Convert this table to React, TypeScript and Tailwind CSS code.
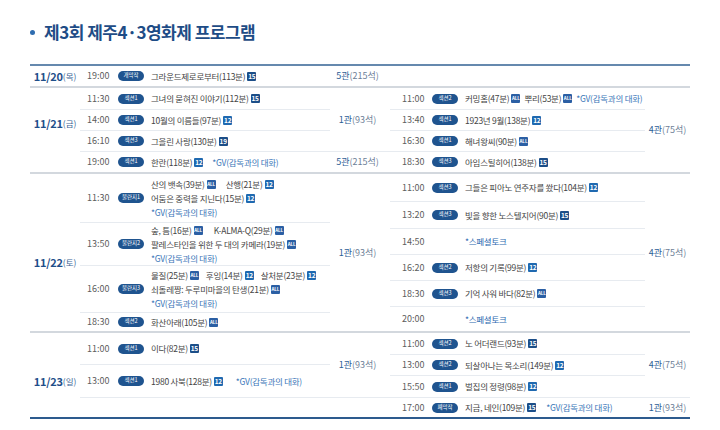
import clsx from 'clsx';

type Rating = 'ALL' | '12' | '15' | '19';
type Piece = { t: string; r?: Rating } | 'GV' | 'TALK';

type Row = { time?: string; badge?: string; h: string; lines: Piece[][]; gap?: string };
type Group = { venue?: [string, string]; rows: Row[] };
type Section = {
  date: string;
  day: string;
  h: string;
  datePad: string;
  left: Group[];
  right: Group[];
};

const GV: Piece = 'GV';
const TALK: Piece = 'TALK';

const sections: Section[] = [
  {
    date: '11/20',
    day: '(목)',
    h: 'h-[22px]',
    datePad: '',
    left: [
      {
        venue: ['5관', '(215석)'],
        rows: [{ time: '19:00', badge: '개막작', h: 'h-[20px]', lines: [[{ t: '그라운드제로로부터(113분)', r: '15' }]] }],
      },
    ],
    right: [],
  },
  {
    date: '11/21',
    day: '(금)',
    h: 'h-[86px]',
    datePad: 'pb-[14px]',
    left: [
      {
        venue: ['1관', '(93석)'],
        rows: [
          { time: '11:30', badge: '섹션1', h: 'h-[21px]', lines: [[{ t: '그녀의 묻혀진 이야기(112분)', r: '15' }]] },
          { time: '14:00', badge: '섹션1', h: 'h-[21px]', lines: [[{ t: '10월의 이름들(97분)', r: '12' }]] },
          { time: '16:10', badge: '섹션3', h: 'h-[21px]', lines: [[{ t: '그을린 사랑(130분)', r: '19' }]] },
        ],
      },
      {
        venue: ['5관', '(215석)'],
        rows: [{ time: '19:00', badge: '섹션1', h: 'h-[21px]', gap: 'gap-[9px]', lines: [[{ t: '한란(118분)', r: '12' }, GV]] }],
      },
    ],
    right: [
      {
        venue: ['4관', '(75석)'],
        rows: [
          {
            time: '11:00',
            badge: '섹션2',
            h: 'h-[21px]',
            gap: 'gap-[4px]',
            lines: [[{ t: '커밍홈(47분)', r: 'ALL' }, { t: '뿌리(53분)', r: 'ALL' }, GV]],
          },
          { time: '13:40', badge: '섹션1', h: 'h-[21px]', lines: [[{ t: '1923년 9월(138분)', r: '12' }]] },
          { time: '16:30', badge: '섹션1', h: 'h-[21px]', lines: [[{ t: '해녀왕씨(90분)', r: 'ALL' }]] },
          { time: '18:30', badge: '섹션3', h: 'h-[21px]', lines: [[{ t: '아임스틸히어(138분)', r: '15' }]] },
        ],
      },
    ],
  },
  {
    date: '11/22',
    day: '(토)',
    h: 'h-[159px]',
    datePad: 'pt-[19px]',
    left: [
      {
        venue: ['1관', '(93석)'],
        rows: [
          {
            time: '11:30',
            badge: '불란지1',
            h: 'h-[48px]',
            gap: 'gap-[10px]',
            lines: [
              [{ t: '산의 뱃속(39분)', r: 'ALL' }, { t: '산행(21분)', r: '12' }],
              [{ t: '어둠은 중력을 지닌다(15분)', r: '12' }],
              [GV],
            ],
          },
          {
            time: '13:50',
            badge: '불란지2',
            h: 'h-[43px]',
            gap: 'gap-[11px]',
            lines: [
              [{ t: '숲, 틈(16분)', r: 'ALL' }, { t: 'K-ALMA-Q(29분)', r: 'ALL' }],
              [{ t: '팔레스타인을 위한 두 대의 카메라(19분)', r: 'ALL' }],
              [GV],
            ],
          },
          {
            time: '16:00',
            badge: '불란지3',
            h: 'h-[47px]',
            gap: 'gap-[7px]',
            lines: [
              [{ t: '물질(25분)', r: 'ALL' }, { t: '후잉(14분)', r: '12' }, { t: '살처분(23분)', r: '12' }],
              [{ t: '쇠돌레짱: 두루미마을의 탄생(21분)', r: 'ALL' }],
              [GV],
            ],
          },
          { time: '18:30', badge: '섹션2', h: 'h-[19px]', lines: [[{ t: '화산아래(105분)', r: 'ALL' }]] },
        ],
      },
    ],
    right: [
      {
        venue: ['4관', '(75석)'],
        rows: [
          { time: '11:00', badge: '섹션3', h: 'h-[27px]', lines: [[{ t: '그들은 피아노 연주자를 쐈다(104분)', r: '12' }]] },
          { time: '13:20', badge: '섹션3', h: 'h-[27px]', lines: [[{ t: '빛을 향한 노스텔지어(90분)', r: '15' }]] },
          { time: '14:50', h: 'h-[26px]', lines: [[TALK]] },
          { time: '16:20', badge: '섹션2', h: 'h-[26px]', lines: [[{ t: '저항의 기록(99분)', r: '12' }]] },
          { time: '18:30', badge: '섹션3', h: 'h-[26px]', lines: [[{ t: '기억 사워 바다(82분)', r: 'ALL' }]] },
          { time: '20:00', h: 'h-[25px]', lines: [[TALK]] },
        ],
      },
    ],
  },
  {
    date: '11/23',
    day: '(일)',
    h: 'h-[84px]',
    datePad: 'pt-[12px]',
    left: [
      {
        venue: ['1관', '(93석)'],
        rows: [
          { time: '11:00', badge: '섹션1', h: 'h-[31px]', lines: [[{ t: '이다(82분)', r: '15' }]] },
          { time: '13:00', badge: '섹션1', h: 'h-[33px]', gap: 'gap-[13px]', lines: [[{ t: '1980 사북(128분)', r: '12' }, GV]] },
        ],
      },
      { rows: [{ h: 'h-[20px]', lines: [] }] },
    ],
    right: [
      {
        venue: ['4관', '(75석)'],
        rows: [
          { time: '11:00', badge: '섹션2', h: 'h-[21px]', lines: [[{ t: '노 어더랜드(93분)', r: '15' }]] },
          { time: '13:00', badge: '섹션2', h: 'h-[21px]', lines: [[{ t: '되살아나는 목소리(149분)', r: '12' }]] },
          { time: '15:50', badge: '섹션1', h: 'h-[22px]', lines: [[{ t: '벌집의 정령(98분)', r: '12' }]] },
        ],
      },
      {
        venue: ['1관', '(93석)'],
        rows: [{ time: '17:00', badge: '폐막작', h: 'h-[20px]', gap: 'gap-[10px]', lines: [[{ t: '지금, 네인(109분)', r: '15' }, GV]] }],
      },
    ],
  },
];

const ratingBg: Record<Rating, string> = {
  ALL: 'bg-[#2b5fa4]',
  '12': 'bg-[#1f69b0]',
  '15': 'bg-[#1c4e88]',
  '19': 'bg-[#1c4e88]',
};

function RatingMark({ r }: { r: Rating }) {
  return (
    <span
      className={clsx(
        'ml-[2px] inline-flex h-[9px] w-[9px] shrink-0 items-center justify-center rounded-[1px] font-bold leading-none text-white',
        r === 'ALL' ? 'text-[4.5px] tracking-[-0.02em]' : 'text-[6.5px] tracking-[-0.04em]',
        ratingBg[r],
      )}
    >
      {r}
    </span>
  );
}

function PieceView({ p }: { p: Piece }) {
  if (p === 'GV') return <span className="text-[#3a76b8]">*GV(감독과의 대화)</span>;
  if (p === 'TALK') return <span className="text-[#2d69b0]">*스페셜토크</span>;
  return (
    <span className="flex items-center">
      <span>{p.t}</span>
      {p.r && <RatingMark r={p.r} />}
    </span>
  );
}

function RowView({ row, first, timeCls }: { row: Row; first: boolean; timeCls: string }) {
  return (
    <div className={clsx('flex items-center', row.h, !first && 'border-t border-[#e7ebf0]')}>
      <div className={clsx('shrink-0 text-[9px] text-[#5c5c5c]', timeCls)}>{row.time}</div>
      <div className="w-[26px] shrink-0">
        {row.badge && (
          <span className="flex h-[10px] w-[26px] items-center justify-center rounded-full bg-[#1f548f] text-[5.5px] leading-none text-white">
            {row.badge}
          </span>
        )}
      </div>
      <div className="ml-[7px] flex flex-col justify-center text-[8.5px] tracking-[-0.03em] text-[#444]">
        {row.lines.map((line, i) => (
          <div key={i} className={clsx('flex h-[14px] items-center', row.gap ?? 'gap-[9px]')}>
            {line.map((p, j) => (
              <PieceView key={j} p={p} />
            ))}
          </div>
        ))}
      </div>
    </div>
  );
}

function Half({
  groups,
  rowsW,
  venueW,
  timeCls,
}: {
  groups: Group[];
  rowsW: string;
  venueW: string;
  timeCls: string;
}) {
  return (
    <div className="flex flex-col">
      {groups.map((g, gi) => (
        <div key={gi} className="flex">
          <div className={clsx('flex flex-col', rowsW)}>
            {g.rows.map((row, ri) => (
              <RowView key={ri} row={row} first={gi === 0 && ri === 0} timeCls={timeCls} />
            ))}
          </div>
          <div className={clsx('flex items-center justify-center text-[9px]', venueW, gi > 0 && 'border-t border-[#e7ebf0]')}>
            {g.venue && (
              <span>
                <span className="text-[#2c5d95]">{g.venue[0]}</span>
                <span className="text-[#6d8097]">{g.venue[1]}</span>
              </span>
            )}
          </div>
        </div>
      ))}
    </div>
  );
}

export default function App() {
  return (
    <div className="h-[430px] w-[720px] overflow-hidden bg-white font-['Noto_Sans_CJK_KR','Noto_Sans',sans-serif]">
      <div className="flex h-[64px] items-center pl-[30px]">
        <span className="h-[5px] w-[5px] rounded-full bg-[#2f6db0]" />
        <h1 className="ml-[9px] text-[17px] font-bold tracking-[-0.03em] text-[#1e4c86]">제3회 제주4·3영화제 프로그램</h1>
      </div>

      <div className="mx-[30px] w-[660px] border-t-2 border-b-2 border-t-[#6589ae] border-b-[#2d5b8e]">
        {sections.map((s, i) => (
          <div
            key={s.date}
            className={clsx('flex', s.h, i < sections.length - 1 && 'border-b-2 border-[#d3d8de]')}
          >
            <div className={clsx('flex w-[50px] shrink-0 items-center justify-center', s.datePad)}>
              <span className="font-bold text-[11px] tracking-[-0.02em] text-[#1f4f8a]">{s.date}</span>
              <span className="text-[8.5px] text-[#3d6595]">{s.day}</span>
            </div>
            <div className="w-[310px] shrink-0">
              <Half groups={s.left} rowsW="w-[250px]" venueW="w-[60px] pr-[5px]" timeCls="w-[38px] pl-[7px]" />
            </div>
            <div className="w-[300px] shrink-0">
              <Half groups={s.right} rowsW="w-[255px]" venueW="w-[45px]" timeCls="w-[42px] pl-[12px]" />
            </div>
          </div>
        ))}
      </div>
    </div>
  );
}
